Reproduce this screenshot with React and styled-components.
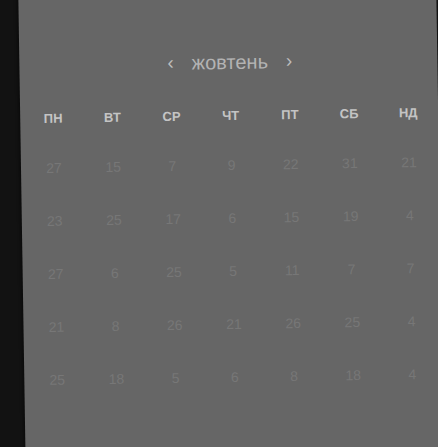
import React from "react";
import styled, { createGlobalStyle } from "styled-components";

const GlobalStyle = createGlobalStyle`
    html, body {
        margin: 0;
        padding: 0;
        background: #121212;
        overflow: hidden;
        height: 100%;
    }
    body {
        font-family: "Liberation Sans", Arial, sans-serif;
    }
`;

const Stage = styled.div`
    width: 438px;
    height: 447px;
    overflow: hidden;
`;

const Panel = styled.div`
    width: 418px;
    height: 500px;
    margin: -20px 0 0 22px;
    padding: 70px 0 0 3px;
    box-sizing: border-box;
    background: #666666;
    box-shadow: -2px 0 3px rgba(0, 0, 0, 0.35);
    transform: rotate(-0.9deg);
    transform-origin: 50% 50%;
`;

const MonthBar = styled.div`
    display: flex;
    align-items: center;
    justify-content: center;
    gap: 18px;
    height: 24px;
`;

const Arrow = styled.button`
    border: 0;
    background: none;
    padding: 0;
    color: #bdbdbd;
    font-family: inherit;
    font-size: 19px;
    line-height: 24px;
    cursor: pointer;
`;

const MonthName = styled.span`
    color: #b3b3b3;
    font-size: 20px;
    line-height: 24px;
`;

const Grid = styled.div`
    display: grid;
    grid-template-columns: repeat(7, 59.2px);
    justify-content: center;
    margin-top: ${({ $top }) => $top}px;
`;

const Head = styled.div`
    height: 20px;
    line-height: 20px;
    text-align: center;
    font-size: 13px;
    font-weight: bold;
    color: #c4c4c4;
`;

const Day = styled.div`
    height: 53px;
    line-height: 53px;
    text-align: center;
    font-size: 14px;
    color: #777777;
`;

const weekdays = ["ПН", "ВТ", "СР", "ЧТ", "ПТ", "СБ", "НД"];

const weeks = [
    [27, 15, 7, 9, 22, 31, 21],
    [23, 25, 17, 6, 15, 19, 4],
    [27, 6, 25, 5, 11, 7, 7],
    [21, 8, 26, 21, 26, 25, 4],
    [25, 18, 5, 6, 8, 18, 4],
];

const App = () => (
    <Stage>
        <GlobalStyle />
        <Panel>
            <MonthBar>
                <Arrow aria-label="Попередній місяць">‹</Arrow>
                <MonthName>жовтень</MonthName>
                <Arrow aria-label="Наступний місяць">›</Arrow>
            </MonthBar>
            <Grid $top={32}>
                {weekdays.map((d) => (
                    <Head key={d}>{d}</Head>
                ))}
            </Grid>
            <Grid $top={13}>
                {weeks.flat().map((n, i) => (
                    <Day key={i}>{n}</Day>
                ))}
            </Grid>
        </Panel>
    </Stage>
);

export default App;
